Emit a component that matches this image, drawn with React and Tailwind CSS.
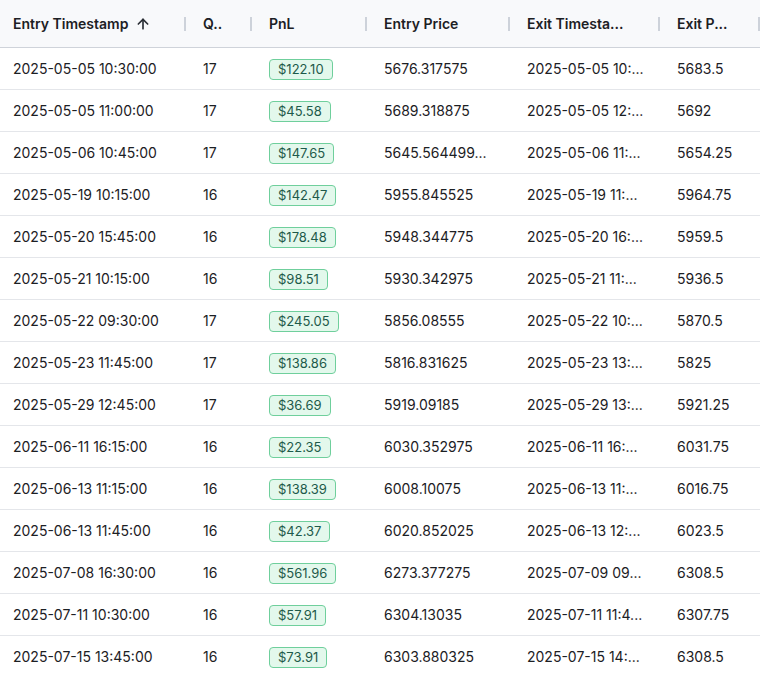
import React from 'react';
import { ArrowUp } from 'lucide-react';

const trades = [
  ['2025-05-05 10:30:00', 17, '$122.10', '5676.317575', '2025-05-05 10:...', '5683.5'],
  ['2025-05-05 11:00:00', 17, '$45.58', '5689.318875', '2025-05-05 12:...', '5692'],
  ['2025-05-06 10:45:00', 17, '$147.65', '5645.564499...', '2025-05-06 11:...', '5654.25'],
  ['2025-05-19 10:15:00', 16, '$142.47', '5955.845525', '2025-05-19 11:...', '5964.75'],
  ['2025-05-20 15:45:00', 16, '$178.48', '5948.344775', '2025-05-20 16:...', '5959.5'],
  ['2025-05-21 10:15:00', 16, '$98.51', '5930.342975', '2025-05-21 11:...', '5936.5'],
  ['2025-05-22 09:30:00', 17, '$245.05', '5856.08555', '2025-05-22 10:...', '5870.5'],
  ['2025-05-23 11:45:00', 17, '$138.86', '5816.831625', '2025-05-23 13:...', '5825'],
  ['2025-05-29 12:45:00', 17, '$36.69', '5919.09185', '2025-05-29 13:...', '5921.25'],
  ['2025-06-11 16:15:00', 16, '$22.35', '6030.352975', '2025-06-11 16:...', '6031.75'],
  ['2025-06-13 11:15:00', 16, '$138.39', '6008.10075', '2025-06-13 11:...', '6016.75'],
  ['2025-06-13 11:45:00', 16, '$42.37', '6020.852025', '2025-06-13 12:...', '6023.5'],
  ['2025-07-08 16:30:00', 16, '$561.96', '6273.377275', '2025-07-09 09...', '6308.5'],
  ['2025-07-11 10:30:00', 16, '$57.91', '6304.13035', '2025-07-11 11:4...', '6307.75'],
  ['2025-07-15 13:45:00', 16, '$73.91', '6303.880325', '2025-07-15 14:...', '6308.5'],
];

const columns = [
  { label: 'Entry Timestamp', width: 'w-[190px]', sorted: true },
  { label: 'Q..', width: 'w-[66px]' },
  { label: 'PnL', width: 'w-[115px]' },
  { label: 'Entry Price', width: 'w-[143px]' },
  { label: 'Exit Timesta...', width: 'w-[150px]' },
  { label: 'Exit P...', width: 'w-[100px]' },
];

function HeaderCell({ col }) {
  return (
    <div className={`${col.width} shrink-0 h-full flex items-center justify-between pl-[13px] pr-[4px]`}>
      <div className="flex items-center font-semibold text-[14px] text-[#1c2024] whitespace-nowrap">
        {col.label}
        {col.sorted && <ArrowUp className="ml-[7px] h-4 w-4 text-[#2b2f36]" strokeWidth={2.5} />}
      </div>
      <div className="w-[2px] h-[14px] bg-[#cdd2da]" />
    </div>
  );
}

export default function TradesTable() {
  return (
    <div className="w-[760px] h-[675px] overflow-hidden bg-white font-['Inter',sans-serif] text-[#1c2024]">
      <div className="w-[764px]">
        <div className="flex h-[48px] bg-[#f8f9fb] border-b border-[#cfd3da]">
          {columns.map((c) => <HeaderCell key={c.label} col={c} />)}
        </div>
        {trades.map((t, i) => (
          <div key={i} className="flex h-[42px] items-center border-b border-[#e4e6ea] text-[14px]">
            <div className="w-[190px] shrink-0 pl-[13px] whitespace-nowrap">{t[0]}</div>
            <div className="w-[66px] shrink-0 pl-[13px]">{t[1]}</div>
            <div className="w-[115px] shrink-0 pl-[13px]">
              <span className="inline-flex items-center h-[21px] px-2 rounded-[4px] border border-[#6fcf9c] bg-[#e3f8ec] text-[13px] text-[#1e5a4a] leading-none">
                {t[2]}
              </span>
            </div>
            <div className="w-[143px] shrink-0 pl-[13px] whitespace-nowrap">{t[3]}</div>
            <div className="w-[150px] shrink-0 pl-[13px] whitespace-nowrap">{t[4]}</div>
            <div className="w-[100px] shrink-0 pl-[13px] whitespace-nowrap">{t[5]}</div>
          </div>
        ))}
      </div>
    </div>
  );
}
